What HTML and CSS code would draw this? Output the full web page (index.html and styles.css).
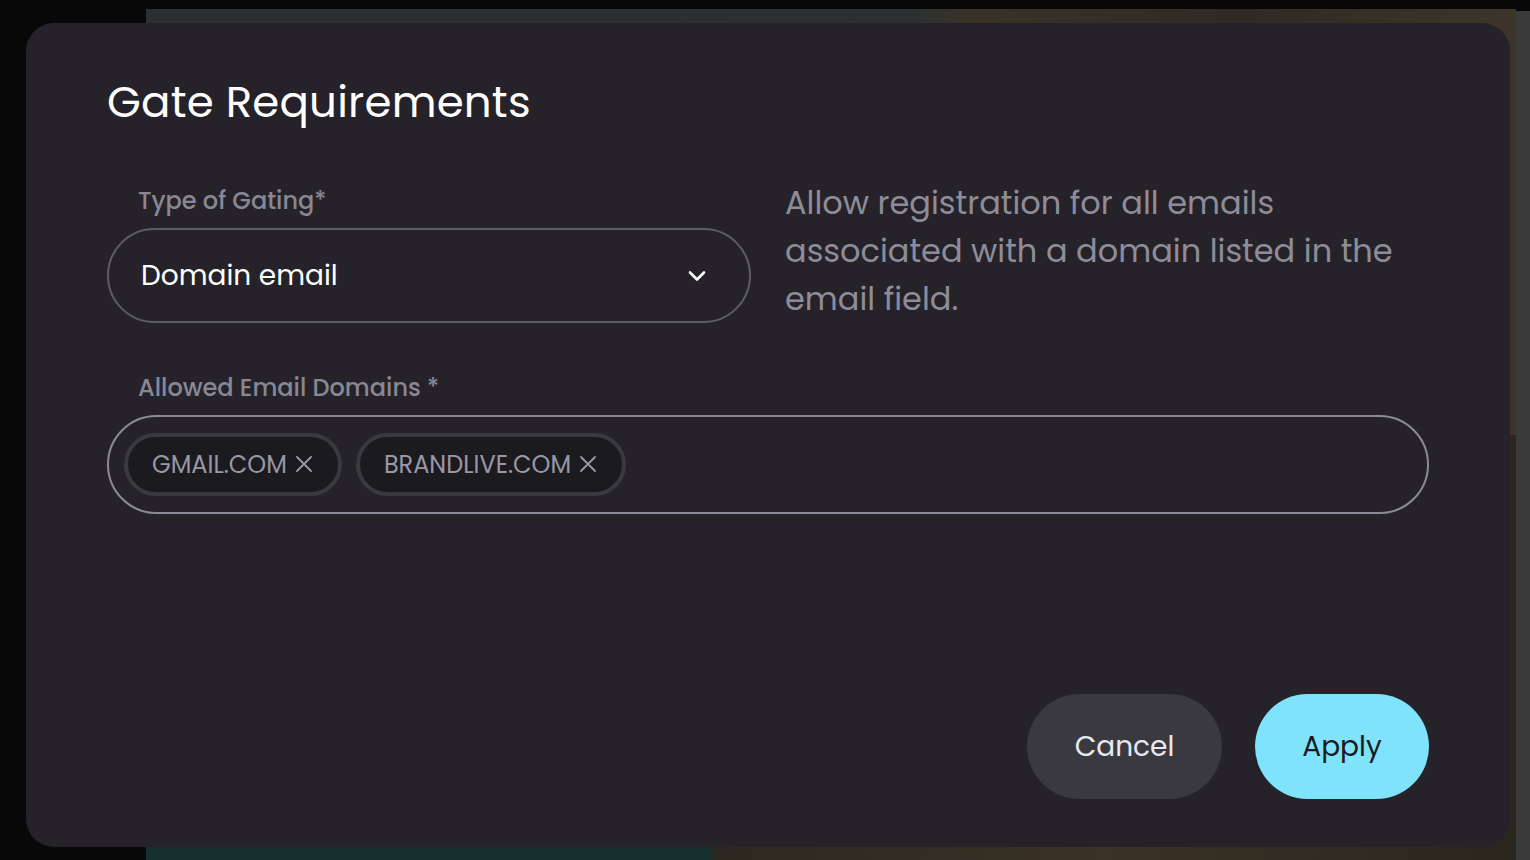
FILE: index.html
```html
<!DOCTYPE html>
<html lang="en">
<head>
<meta charset="utf-8">
<title>Gate Requirements</title>
<link rel="stylesheet" href="styles.css">
</head>
<body>
<div class="page">
  <div class="backdrop">
    <div class="bd-top"></div>
    <div class="bd-bottom"></div>
  </div>
  <div class="scroll-strip"></div>

  <div class="modal" role="dialog" aria-labelledby="modal-title">
    <h1 class="title" id="modal-title">Gate Requirements</h1>

    <div class="row">
      <div class="field">
        <label class="label">Type of Gating*</label>
        <div class="select">
          <span class="select-value">Domain email</span>
          <svg class="chevron" width="24" height="24" viewBox="0 0 24 24" fill="none" stroke="currentColor" stroke-width="2.6" stroke-linecap="round" stroke-linejoin="round"><path d="M5 8.5l7 7 7-7"/></svg>
        </div>
      </div>
      <p class="desc">Allow registration for all emails associated with a domain listed in the email field.</p>
    </div>

    <div class="field domains">
      <label class="label">Allowed Email Domains *</label>
      <div class="tag-input">
        <span class="chip">GMAIL.COM<svg class="x" width="18" height="18" viewBox="0 0 18 18" fill="none" stroke="currentColor" stroke-width="1.8" stroke-linecap="round"><path d="M2 2l14 14M16 2L2 16"/></svg></span>
        <span class="chip">BRANDLIVE.COM<svg class="x" width="18" height="18" viewBox="0 0 18 18" fill="none" stroke="currentColor" stroke-width="1.8" stroke-linecap="round"><path d="M2 2l14 14M16 2L2 16"/></svg></span>
      </div>
    </div>

    <div class="actions">
      <button class="btn btn-cancel">Cancel</button>
      <button class="btn btn-apply">Apply</button>
    </div>
  </div>
</div>
</body>
</html>
```

FILE: styles.css
```css
* { box-sizing: border-box; }

html, body {
  margin: 0;
  padding: 0;
  height: 100%;
  background: #080808;
  overflow: hidden;
}

.page {
  position: relative;
  width: 1530px;
  height: 860px;
  font-family: "Poppins", "Inter", "Noto Sans", sans-serif;
}

.backdrop {
  position: absolute;
  left: 146px;
  top: 9px;
  width: 1370px;
  bottom: 0;
  display: flex;
  flex-direction: column;
}

.bd-top {
  flex: 1;
  background:
    linear-gradient(to right, #2b2f31 0, #2c3032 56%, #3a3229 60%, #2f2a23 80%, #3d352a 100%);
}

.bd-bottom {
  flex: 1;
  background:
    linear-gradient(to right, #15302d 0, #15302d 41%, #2c2720 41.5%, #3a3226 70%, #2a251e 100%);
}

.scroll-strip {
  position: absolute;
  left: 1516px;
  top: 11px;
  width: 14px;
  bottom: 0;
  background: #3a3a3a;
}

.modal {
  position: absolute;
  left: 26px;
  top: 23px;
  width: 1484px;
  height: 824px;
  background: #252329;
  border-radius: 28px;
  padding: 51px 81px 48px 81px;
  display: flex;
  flex-direction: column;
}

.title {
  margin: 0;
  font-size: 43.5px;
  font-weight: 400;
  color: #ffffff;
  line-height: 56px;
  letter-spacing: 0.2px;
}

.row {
  display: grid;
  grid-template-columns: 644px 644px;
  column-gap: 34px;
  align-items: start;
  margin-top: 56px;
}

.field {
  display: flex;
  flex-direction: column;
}

.label {
  font-size: 24px;
  font-weight: 500;
  color: #8a8795;
  line-height: 30px;
  padding-left: 31px;
  margin-bottom: 12px;
}

.select {
  height: 95px;
  border: 2px solid #5e5b68;
  border-radius: 48px;
  display: flex;
  align-items: center;
  justify-content: space-between;
  padding: 0 40px 0 32px;
}

.select-value {
  font-size: 28px;
  color: #ffffff;
  font-weight: 400;
}

.chevron {
  color: #ffffff;
}

.desc {
  margin: -7px 0 0 0;
  font-size: 32px;
  line-height: 48px;
  color: #8f8c99;
  font-weight: 400;
}

.domains {
  margin-top: 50px;
}

.tag-input {
  height: 99px;
  border: 2px solid #8d8a98;
  border-radius: 50px;
  display: flex;
  align-items: center;
  gap: 14px;
  padding: 0 15px;
}

.chip {
  display: inline-flex;
  align-items: center;
  gap: 8px;
  height: 63px;
  padding: 0 25px 0 24px;
  background: #1b1a1f;
  border: 4px solid #3a3940;
  border-radius: 32px;
  font-size: 24px;
  color: #9a97a6;
}

.chip .x {
  color: #9a97a6;
  margin-top: -2px;
}

.actions {
  margin-top: auto;
  display: flex;
  justify-content: flex-end;
  gap: 33px;
}

.btn {
  border: none;
  height: 105px;
  border-radius: 53px;
  font-family: inherit;
  font-size: 28px;
  font-weight: 400;
  cursor: pointer;
}

.btn-cancel {
  width: 195px;
  background: #3a3940;
  color: #e9e7ef;
}

.btn-apply {
  width: 174px;
  background: #7fe3fb;
  color: #1b1a1f;
}
```
